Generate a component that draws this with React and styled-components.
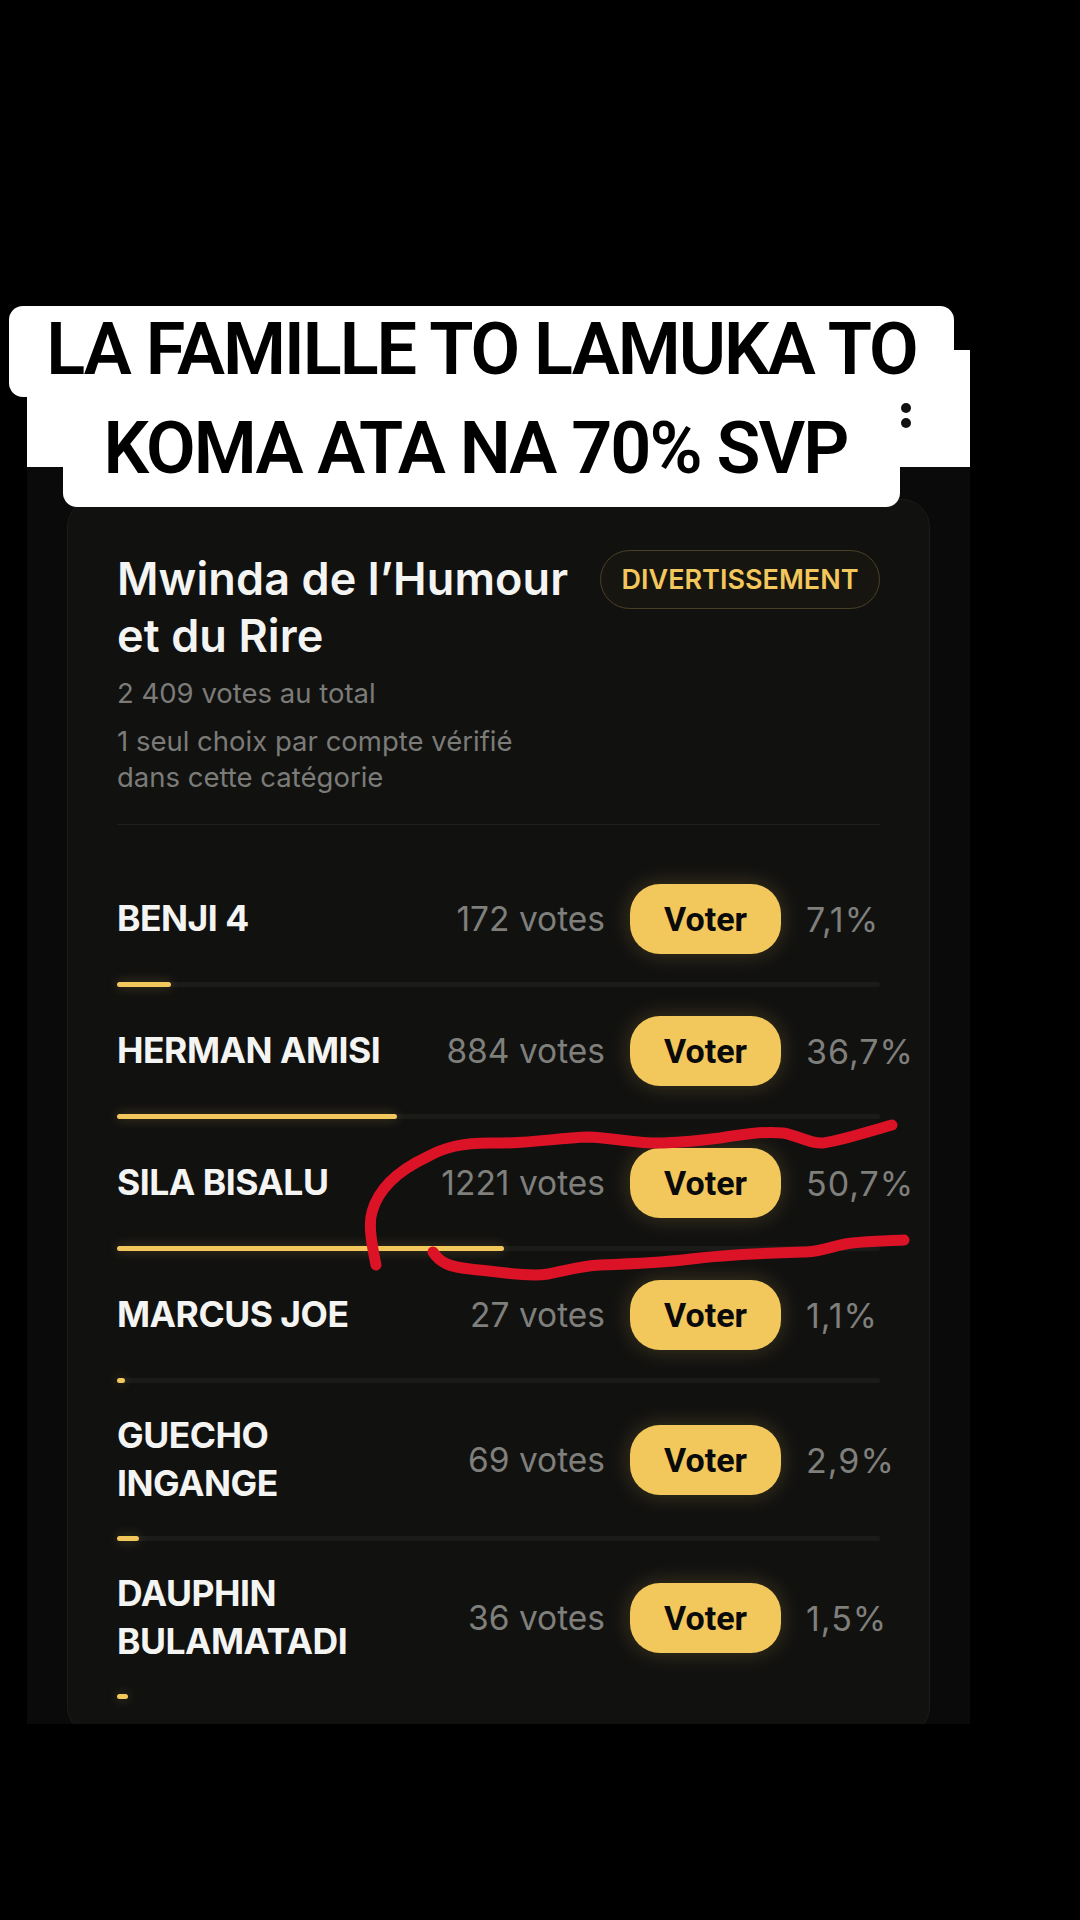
import styled, { createGlobalStyle } from "styled-components";

const GlobalStyle = createGlobalStyle`
  html, body {
    margin: 0;
    padding: 0;
    background: #000;
  }
  * {
    box-sizing: border-box;
  }
`;

const Page = styled.div`
  position: relative;
  width: 1080px;
  height: 1920px;
  overflow: hidden;
  background: #000;
  font-family: "Inter", "Liberation Sans", sans-serif;
`;

const Screen = styled.div`
  width: 943px;
  margin-left: 27px;
  padding-top: 350px;
`;

const TopBar = styled.div`
  display: flex;
  justify-content: flex-end;
  height: 117px;
  padding: 53px 59px 0 0;
  background: #fff;
`;

const MenuDots = styled.div`
  display: flex;
  flex-direction: column;
  gap: 5px;
`;

const Dot = styled.span`
  width: 10px;
  height: 10px;
  border-radius: 50%;
  background: #111;
`;

const Body = styled.div`
  height: 1257px;
  padding: 32px 40px 0;
  overflow: hidden;
  background: #0a0a0a;
`;

const Card = styled.section`
  height: 1236px;
  padding: 50px 49px 0;
  background: #111110;
  border: 1px solid #1c1c1a;
  border-radius: 28px;
`;

const Head = styled.header`
  display: flex;
  justify-content: space-between;
  align-items: flex-start;
`;

const Title = styled.h1`
  width: 470px;
  margin: 0;
  font-size: 45px;
  font-weight: 600;
  line-height: 57px;
  letter-spacing: 0.1px;
  color: #f4f4f2;
`;

const Badge = styled.span`
  display: flex;
  align-items: center;
  justify-content: center;
  width: 280px;
  height: 59px;
  border: 1.5px solid #4b4126;
  border-radius: 30px;
  background: #17150f;
  font-size: 27px;
  font-weight: 600;
  color: #f2c75c;
`;

const Total = styled.p`
  margin: 11px 0 0;
  font-size: 27.5px;
  line-height: 36px;
  color: #7b7b78;
`;

const Rule = styled.p`
  margin: 12px 0 0;
  width: 420px;
  font-size: 27.5px;
  line-height: 36px;
  color: #7b7b78;
`;

const Divider = styled.hr`
  height: 1px;
  margin: 29px 0 59px;
  border: 0;
  background: #1f1f1d;
`;

const Row = styled.div`
  display: flex;
  align-items: center;
  min-height: 70px;
`;

const Name = styled.div`
  flex: 0 0 300px;
  margin-right: auto;
  font-size: 35.5px;
  font-weight: 700;
  line-height: 48px;
  letter-spacing: -0.5px;
  color: #f4f4f2;
`;

const Votes = styled.span`
  font-size: 33.5px;
  white-space: nowrap;
  color: #7f7f7c;
`;

const VoteButton = styled.button`
  width: 151px;
  height: 70px;
  margin: 0 25px;
  border: 0;
  border-radius: 30px;
  background: #f2c75c;
  box-shadow: 0 0 22px rgba(242, 199, 92, 0.22);
  font-family: "Roboto", sans-serif;
  font-size: 34px;
  font-weight: 700;
  color: #0a0a0a;
`;

const Percent = styled.span`
  width: 74px;
  font-size: 34px;
  letter-spacing: 1px;
  white-space: nowrap;
  color: #7f7f7c;
`;

const Track = styled.div`
  height: 5px;
  margin-top: 28px;
  border-radius: 3px;
  background: #1b1b19;
`;

const Fill = styled.div`
  height: 100%;
  border-radius: 3px;
  background: #f2c75c;
  box-shadow: 0 0 12px rgba(242, 199, 92, 0.3);
`;

const Candidate = styled.div`
  margin-bottom: 29px;

  &:last-child ${Track} {
    background: transparent;
  }
`;

const Captions = styled.div`
  position: absolute;
  top: 306px;
  left: 9px;
  display: flex;
  flex-direction: column;
  align-items: center;
  width: 945px;
`;

const CaptionLine = styled.div`
  width: ${(p) => p.$width}px;
  height: ${(p) => p.$height}px;
  padding-right: ${(p) => p.$shift || 0}px;
  border-radius: ${(p) => p.$radius};
  background: #fff;
  font-family: "Roboto", "Liberation Sans", sans-serif;
  font-size: 72px;
  font-weight: 600;
  line-height: ${(p) => p.$lineHeight}px;
  letter-spacing: -2px;
  text-align: center;
  white-space: nowrap;
  color: #000;
`;

const Scribble = styled.svg`
  position: absolute;
  top: 0;
  left: 0;
`;

const candidates = [
  { name: "BENJI 4", votes: "172 votes", percent: 7.1 },
  { name: "HERMAN AMISI", votes: "884 votes", percent: 36.7 },
  { name: "SILA BISALU", votes: "1221 votes", percent: 50.7 },
  { name: "MARCUS JOE", votes: "27 votes", percent: 1.1 },
  { name: "GUECHO INGANGE", votes: "69 votes", percent: 2.9 },
  { name: "DAUPHIN BULAMATADI", votes: "36 votes", percent: 1.5 },
];

export default function App() {
  return (
    <Page>
      <GlobalStyle />
      <Screen>
        <TopBar>
          <MenuDots>
            <Dot />
            <Dot />
          </MenuDots>
        </TopBar>
        <Body>
          <Card>
            <Head>
              <Title>Mwinda de l’Humour et du Rire</Title>
              <Badge>DIVERTISSEMENT</Badge>
            </Head>
            <Total>2 409 votes au total</Total>
            <Rule>1 seul choix par compte vérifié dans cette catégorie</Rule>
            <Divider />
            {candidates.map((c) => (
              <Candidate key={c.name}>
                <Row>
                  <Name>{c.name}</Name>
                  <Votes>{c.votes}</Votes>
                  <VoteButton>Voter</VoteButton>
                  <Percent>{String(c.percent).replace(".", ",")}%</Percent>
                </Row>
                <Track>
                  <Fill style={{ width: `${c.percent}%` }} />
                </Track>
              </Candidate>
            ))}
          </Card>
        </Body>
      </Screen>

      <Captions>
        <CaptionLine $width={945} $height={91} $lineHeight={88} $radius="14px">
          LA FAMILLE TO LAMUKA TO
        </CaptionLine>
        <CaptionLine $width={837} $height={110} $lineHeight={104} $shift={12} $radius="0 0 14px 14px">
          KOMA ATA NA 70% SVP
        </CaptionLine>
      </Captions>

      <Scribble width="1080" height="1920" viewBox="0 0 1080 1920" fill="none">
        <path
          d="M376 1265C372 1245 368 1225 372 1212C378 1190 395 1172 427 1157C445 1147 462 1143 490 1143C530 1144 555 1138 588 1137C615 1138 640 1144 663 1143C690 1142 705 1140 720 1138C745 1134 765 1131 783 1133C800 1136 810 1144 823 1143C840 1141 860 1134 892 1125"
          stroke="#dc1326"
          strokeWidth="11"
          strokeLinecap="round"
        />
        <path
          d="M433 1252C440 1263 450 1267 470 1269C500 1272 530 1277 548 1274C565 1271 580 1266 600 1265C630 1264 660 1263 691 1259C730 1254 770 1253 806 1252C825 1251 838 1244 852 1243C870 1241 885 1241 904 1240"
          stroke="#dc1326"
          strokeWidth="11"
          strokeLinecap="round"
        />
      </Scribble>
    </Page>
  );
}
